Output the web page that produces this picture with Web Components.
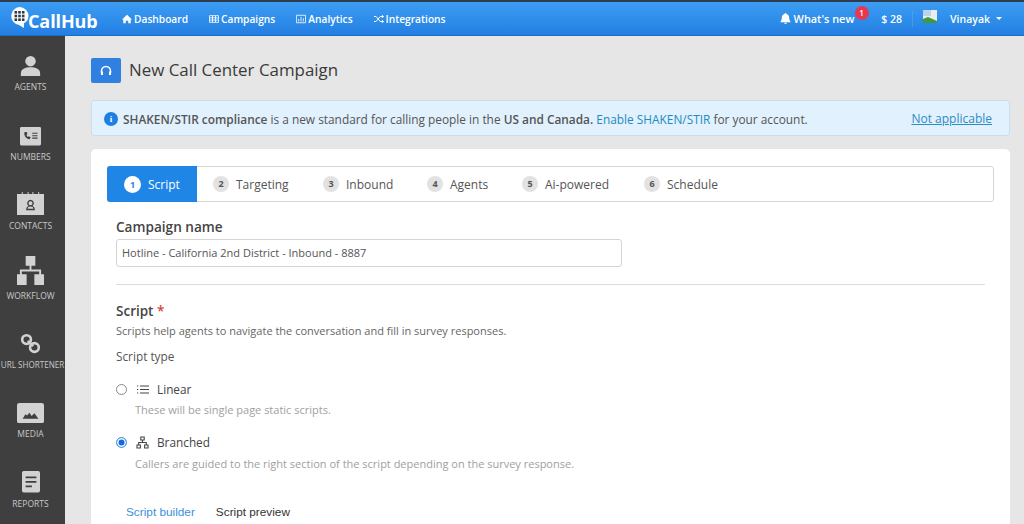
<!DOCTYPE html>
<html>
<head>
<meta charset="utf-8">
<title>New Call Center Campaign</title>
<style>
  html, body { margin: 0; height: 100%; overflow: hidden; }
  body { font-family: "Open Sans", "Liberation Sans", sans-serif; color: #444; background: #e6e6e6; }
  #app { display: grid; grid-template-rows: 36px 488px; height: 524px; }
  #body { display: grid; grid-template-columns: 65px 1fr; overflow: hidden; }
</style>
</head>
<body>
<div id="app">
  <top-bar></top-bar>
  <div id="body">
    <side-nav>
      <nav-item label="AGENTS"><svg viewBox="0 0 24 24"><circle cx="12" cy="7" r="6"/><path d="M1 24v-3c0-5 5-7 11-7s11 2 11 7v3z"/></svg></nav-item>
      <nav-item label="NUMBERS"><svg viewBox="0 0 24 21"><path fill-rule="evenodd" d="M1.500 0h21A1.500 1.500 0 0 1 24 1.500v18a1.500 1.500 0 0 1-1.500 1.500h-21A1.500 1.500 0 0 1 0 19.500v-18A1.500 1.500 0 0 1 1.500 0zM5 6c-.6 4 2 7.500 6 8l1.200-2.200-2.300-1.300-1 .8c-.8-.6-1.300-1.500-1.500-2.500l1.100-.7-.8-2.500zm9 .5v1.300h6V6.500zm0 2.800v1.300h6V9.300zm0 2.800v1.300h6v-1.300z"/></svg></nav-item>
      <nav-item label="CONTACTS" wide><svg viewBox="0 0 28 24"><path fill-rule="evenodd" d="M0 2h5V0h1v2h5V0h1v2h4V0h1v2h5V0h1v2h5v22H0zm14 6a3.600 3.600 0 0 0-2 6.500c-2 .8-2.500 2-2.500 4.500h9c0-2.500-.5-3.700-2.500-4.500A3.600 3.600 0 0 0 14 8zm0 1.500a2.100 2.100 0 1 1 0 4.200 2.100 2.100 0 0 1 0-4.200zm0 5.500c2 0 2.800.8 3 2.500h-6c.2-1.700 1-2.500 3-2.500z"/></svg></nav-item>
      <nav-item label="WORKFLOW" wide><svg viewBox="0 0 28 30"><path d="M9 0h10v10h-4v4h10v5h3v11H18V19h5v-3H5v3h5v11H0V19h3v-5h10v-4H9z"/></svg></nav-item>
      <nav-item label="URL SHORTENER" fit><svg viewBox="0 0 24 24" fill="none" stroke="#d2d2d2" stroke-width="3"><circle cx="7.500" cy="7.500" r="5"/><circle cx="16.500" cy="16.500" r="5"/><path d="M9 9l6 6"/></svg></nav-item>
      <nav-item label="MEDIA" wide><svg viewBox="0 0 24 18"><path fill-rule="evenodd" d="M2 0h20a2 2 0 0 1 2 2v14a2 2 0 0 1-2 2H2a2 2 0 0 1-2-2V2a2 2 0 0 1 2-2zm3 14h14l-3.500-5-2.500 2.500-2-2.800-2 2.300-1.500-1z"/></svg></nav-item>
      <nav-item label="REPORTS"><svg viewBox="0 0 20 24" style="width:18px"><path fill-rule="evenodd" d="M2 0h16a2 2 0 0 1 2 2v20a2 2 0 0 1-2 2H2a2 2 0 0 1-2-2V2a2 2 0 0 1 2-2zm2 6v2h12V6zm0 5v2h12v-2zm0 5v2h7v-2z"/></svg></nav-item>
    </side-nav>
    <campaign-page></campaign-page>
  </div>
</div>

<script>
class TopBar extends HTMLElement {
  constructor() {
    super();
    this.attachShadow({ mode: 'open' });
    this.shadowRoot.innerHTML = `
      <style>
        :host {
          display: flex;
          align-items: center;
          box-sizing: border-box;
          height: 36px;
          padding: 0 22px 0 10px;
          border-top: 2px solid #2b3c4e;
          border-bottom: 1px solid #1f6dbd;
          background: linear-gradient(#3c9df3, #237fe2);
          color: #fff;
          font-size: 10.200px;
          font-weight: 600;
        }
        .logo { display: flex; align-items: flex-start; flex: none; width: 112px; height: 33px; }
        .bubble { margin-top: 5px; width: 19px; height: 21px; flex: none; }
        .logo b { margin: 7px 0 0 -1px; font-size: 18px; font-weight: 700; line-height: 24px; letter-spacing: -.1px; }
        nav { display: flex; gap: 21px; }
        nav span, .bell { display: flex; align-items: center; gap: 2px; }
        nav svg, .bell svg { width: 10px; height: 10px; fill: #fff; stroke: #fff; }
        .right { display: flex; align-items: center; margin-left: auto; position: relative; }
        .bell { font-size: 10.900px; gap: 3px; }
        .badge {
          position: absolute; left: 75px; top: -5px;
          width: 14px; height: 14px; border-radius: 50%;
          background: #e8384f; font-size: 8px; line-height: 14px; text-align: center;
        }
        .credit { margin-left: 27px; font-size: 10.500px; }
        .sep { width: 1px; height: 16px; margin: 0 10px; background: rgba(255,255,255,.12); }
        .avatar { width: 14px; height: 15px; margin-right: 13px; margin-top: -3px; }
        .name { font-size: 10.500px; }
        .caret { margin-left: 6px; width: 0; height: 0; border: 3px solid transparent; border-top: 3.500px solid #fff; border-bottom: 0; }
      </style>
      <div class="logo">
        <svg class="bubble" viewBox="0 0 19 21">
          <path fill="#fff" d="M9.500 0a9 9 0 0 1 9 9c0 3.500-2 6-4.500 7.200V21l-5-3.100-.5-.1A9 9 0 0 1 9.500 0z"/>
          <g fill="#2b3c4e"><rect x="4.500" y="4" width="2.600" height="2.600"/><rect x="8.200" y="4" width="2.600" height="2.600"/><rect x="11.900" y="4" width="2.600" height="2.600"/><rect x="4.500" y="7.700" width="2.600" height="2.600"/><rect x="8.200" y="7.700" width="2.600" height="2.600"/><rect x="11.900" y="7.700" width="2.600" height="2.600"/><rect x="4.500" y="11.400" width="2.600" height="2.600"/><rect x="8.200" y="11.400" width="2.600" height="2.600"/><rect x="11.900" y="11.400" width="2.600" height="2.600"/></g>
        </svg>
        <b>CallHub</b>
      </div>
      <nav>
        <span><svg viewBox="0 0 12 12" stroke-width="0"><path d="M6 1l6 5.500h-1.500V11H7.500V8h-3v3H1.500V6.500H0z"/></svg>Dashboard</span>
        <span><svg viewBox="0 0 12 12" fill="none" style="fill:none" stroke-width="1"><path d="M.5 2h11v8H.5zM.5 4.700h11M.5 7.300h11M4.200 2v8M7.800 2v8"/></svg>Campaigns</span>
        <span><svg viewBox="0 0 12 12" style="fill:none" stroke-width="1"><path d="M.5 1.500h11v9H.5zM3.200 9V6M6 9V3.500M8.800 9V5"/></svg>Analytics</span>
        <span><svg viewBox="0 0 12 12" style="fill:none" stroke-width="1.200"><path d="M0 3h2.500l5 6H11M0 9h2.500l5-6H11M9.500 1.500L11.500 3l-2 1.500M9.500 7.500l2 1.500-2 1.500"/></svg>Integrations</span>
      </nav>
      <div class="right">
        <span class="bell"><svg viewBox="0 0 12 12" stroke-width="0" style="width:11px;height:11px"><path d="M6 0c.6 0 1 .4 1 1 2 .5 3 2 3 4 0 2.500.7 3.500 1.500 4.500v.5H.5v-.5C1.300 8.500 2 7.500 2 5c0-2 1-3.500 3-4 0-.6.4-1 1-1zM4.500 10.700h3C7.500 11.500 6.800 12 6 12s-1.500-.5-1.500-1.300z"/></svg>What's new</span>
        <span class="badge">1</span>
        <span class="credit">$ 28</span>
        <span class="sep"></span>
        <svg class="avatar" viewBox="0 0 14 15"><rect width="14" height="15" fill="#e8eef0"/><rect x="0" y="0" width="8" height="6" fill="#bcd3e8"/><path d="M0 13V9l5-2 9 4v2z" fill="#3d9a3f"/><rect y="13" width="14" height="2" fill="#2a87e6"/></svg>
        <span class="name">Vinayak</span>
        <span class="caret"></span>
      </div>
    `;
  }
}

class SideNav extends HTMLElement {
  constructor() {
    super();
    this.attachShadow({ mode: 'open' });
    this.shadowRoot.innerHTML = `
      <style>
        :host {
          display: flex;
          flex-direction: column;
          padding-top: 10px;
          overflow: hidden;
          background: #3f3f3f;
        }
      </style>
      <slot></slot>
    `;
  }
}

class NavItem extends HTMLElement {
  constructor() {
    super();
    this.attachShadow({ mode: 'open' });
    this.shadowRoot.innerHTML = `
      <style>
        :host {
          display: flex;
          flex: none;
          flex-direction: column;
          align-items: center;
          justify-content: flex-end;
          width: 61px;
          height: 69.400px;
          box-sizing: border-box;
          padding-bottom: 23px;
          color: #c8c8c8;
          fill: #d2d2d2;
          font-size: 8.500px;
          white-space: nowrap;
        }
        .icon { display: flex; align-items: flex-end; justify-content: center; height: 30px; margin-bottom: 5px; }
        ::slotted(svg) { width: 21px; height: auto; max-height: 30px; }
        :host([wide]) ::slotted(svg) { width: 27px; }
        .label { width: 61px; display: flex; justify-content: center; }
        :host([fit]) .label { align-self: flex-start; width: 65px; font-size: 8.100px; }
      </style>
      <div class="icon"><slot></slot></div>
      <div class="label"></div>
    `;
    this.shadowRoot.querySelector('.label').textContent = this.getAttribute('label');
  }
}

class StepTabs extends HTMLElement {
  constructor() {
    super();
    this.attachShadow({ mode: 'open' });
    const steps = [['Script', 90], ['Targeting', 110], ['Inbound', 104], ['Agents', 95], ['Ai-powered', 122], ['Schedule', 90]];
    this.shadowRoot.innerHTML = `
      <style>
        :host {
          display: flex;
          height: 36px;
          box-sizing: border-box;
          margin: 0 16px 0 16px;
          border: 1px solid #d6d6d6;
          border-radius: 3px;
          font-size: 12px;
          color: #555;
        }
        .step { display: flex; align-items: center; gap: 7px; box-sizing: border-box; padding-left: 16px; }
        .num {
          width: 16px; height: 16px; border-radius: 50%;
          background: #e2e2e2; color: #555;
          font-size: 9px; font-weight: 700; line-height: 16px; text-align: center;
        }
        .step.on { margin: -1px 0 -1px -1px; background: #1f86e6; color: #fff; border-radius: 3px 0 0 3px; padding-left: 17px; }
        .step.on .num { background: #fff; color: #1f86e6; width: 17px; height: 17px; line-height: 17px; }
      </style>
      ${steps.map(([name, w], i) => `<div class="step${i ? '' : ' on'}" style="width:${w}px"><span class="num">${i + 1}</span>${name}</div>`).join('')}
    `;
  }
}

class ScriptOption extends HTMLElement {
  constructor() {
    super();
    this.attachShadow({ mode: 'open' });
    const checked = this.hasAttribute('checked');
    this.shadowRoot.innerHTML = `
      <style>
        :host { display: block; }
        .row { display: flex; align-items: center; height: 18px; font-size: 11.800px; color: #444; }
        .radio {
          width: 11px; height: 11px; border-radius: 50%; box-sizing: border-box;
          border: 1px solid #8a8a8a; margin-right: 9px; background: #fff;
        }
        .radio.on { border: 1px solid #4c9be8; background: #1668e0; box-shadow: inset 0 0 0 1.500px #fff; }
        .ico { display: flex; width: 21px; }
        ::slotted(svg) { width: 13px; height: 13px; }
        p { margin: 5px 0 0 19px; font-size: 11px; line-height: 14px; color: #a0a0a0; }
        :host([checked]) p { margin-top: 6px; }
      </style>
      <div class="row">
        <span class="radio${checked ? ' on' : ''}"></span>
        <span class="ico"><slot name="icon"></slot></span>
        ${this.getAttribute('label')}
      </div>
      <p>${this.getAttribute('hint')}</p>
    `;
  }
}

class CampaignPage extends HTMLElement {
  constructor() {
    super();
    this.attachShadow({ mode: 'open' });
    this.shadowRoot.innerHTML = `
      <style>
        :host {
          display: block;
          padding: 22px 14px 0 26px;
          overflow: hidden;
          color: #444;
        }
        .title { display: flex; align-items: center; gap: 8px; height: 25px; }
        .title i {
          display: flex; align-items: center; justify-content: center;
          width: 30px; height: 25px; border-radius: 2px; background: #2f80e0;
        }
        .title svg { width: 12px; height: 11px; }
        h1 { margin: 0 0 2px; font-size: 16.900px; font-weight: 400; color: #3a3a3a; }
        .alert {
          display: flex; align-items: center;
          height: 36px; box-sizing: border-box;
          margin-top: 17px; padding: 1px 17px 0 12px;
          border: 1px solid #c8deef; border-radius: 3px;
          background: #e1f1fd;
          font-size: 11.870px; color: #555;
          white-space: nowrap;
        }
        .alert .dot {
          width: 14px; height: 14px; margin-right: 5px; border-radius: 50%;
          background: #1f7fe0; color: #fff; font: 700 9px/14px "Liberation Serif", serif; text-align: center; flex: none;
        }
        .alert b { font-weight: 600; }
        .alert .lnk { color: #1f8ac0; }
        .alert .na { margin-left: auto; color: #2d8cc8; font-size: 12px; text-decoration: underline; }
        .card {
          margin-top: 13px; padding-top: 17px; height: 400px;
          border-radius: 5px 5px 0 0; background: #fff;
        }
        form { display: block; padding: 0 25px; }
        .name { margin: 16px 0 0; font-size: 13.600px; font-weight: 600; line-height: 18px; color: #444; }
        .field {
          box-sizing: border-box; width: 506px; height: 28px; margin-top: 3px; padding: 0 5px 2px;
          border: 1px solid #d4d4d4; border-radius: 3px;
          display: flex; align-items: center;
          font-size: 11px; color: #555;
        }
        hr { height: 1px; margin: 17px 0 17px; border: 0; background: #dcdcdc; }
        h2 { margin: 0; font-size: 13.500px; font-weight: 600; line-height: 18px; color: #444; }
        h2 em { color: #d6453a; font-style: normal; }
        .sub { margin: 4px 0 0; font-size: 11.020px; line-height: 14px; color: #666; }
        .type { margin: 11px 0 16px; font-size: 11.800px; line-height: 15px; color: #555; }
        script-option { margin-bottom: 16px; }
        .tabs { display: flex; gap: 21px; margin: 34px 0 0 10px; font: 11.800px "Liberation Sans", sans-serif; color: #333; }
        .tabs .on { color: #3b8fdc; }
      </style>
      <div class="title">
        <i><svg viewBox="0 0 12 11" fill="none" stroke="#fff" stroke-width="1.600"><path d="M1.500 8V6a4.500 4.500 0 0 1 9 0v2"/><path d="M1 6.500h2v3.500H1zM9 6.500h2v3.500H9z" fill="#fff" stroke="none"/></svg></i>
        <h1>New Call Center Campaign</h1>
      </div>
      <div class="alert">
        <span class="dot">i</span>
        <span><b>SHAKEN/STIR compliance</b> is a new standard for calling people in the <b>US and Canada.</b> <span class="lnk">Enable SHAKEN/STIR</span> for your account.</span>
        <span class="na">Not applicable</span>
      </div>
      <div class="card">
        <step-tabs></step-tabs>
        <form>
          <div class="name">Campaign name</div>
          <div class="field">Hotline - California 2nd District - Inbound - 8887</div>
          <hr>
          <h2>Script <em>*</em></h2>
          <p class="sub">Scripts help agents to navigate the conversation and fill in survey responses.</p>
          <div class="type">Script type</div>
          <script-option label="Linear" hint="These will be single page static scripts.">
            <svg slot="icon" viewBox="0 0 13 13" fill="none" stroke="#444" stroke-width="1.100"><path d="M4 3h9M4 6.500h9M4 10h9M1 3h1.200M1 6.500h1.200M1 10h1.200"/></svg>
          </script-option>
          <script-option checked label="Branched" hint="Callers are guided to the right section of the script depending on the survey response.">
            <svg slot="icon" viewBox="0 0 13 13" fill="none" stroke="#444" stroke-width="1.100"><path d="M4.800 1h3.400v3H4.800zM1 9h3.400v3H1zM8.600 9H12v3H8.600zM6.500 4v2.500M2.700 9V6.500h7.600V9"/></svg>
          </script-option>
          <div class="tabs"><span class="on">Script builder</span><span>Script preview</span></div>
        </form>
      </div>
    `;
  }
}

customElements.define('top-bar', TopBar);
customElements.define('side-nav', SideNav);
customElements.define('nav-item', NavItem);
customElements.define('step-tabs', StepTabs);
customElements.define('script-option', ScriptOption);
customElements.define('campaign-page', CampaignPage);
</script>
</body>
</html>
